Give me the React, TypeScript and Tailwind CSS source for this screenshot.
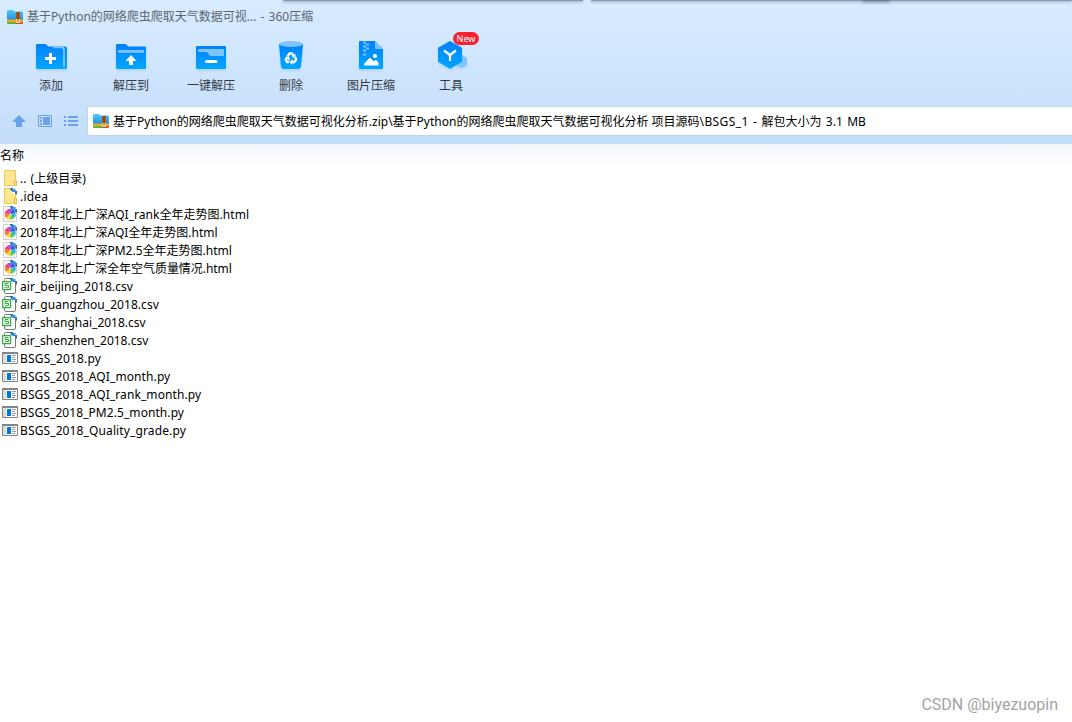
import type { ReactNode } from "react";
import clsx from "clsx";

type FileKind = "up" | "folder" | "html" | "csv" | "py";

interface FileEntry {
  name: string;
  kind: FileKind;
  tracking?: string;
}

const files: FileEntry[] = [
  { name: ".. (上级目录)", kind: "up", tracking: "[word-spacing:1px]" },
  { name: ".idea", kind: "folder", tracking: "tracking-[0.2px]" },
  { name: "2018年北上广深AQI_rank全年走势图.html", kind: "html", tracking: "tracking-[0.03px]" },
  { name: "2018年北上广深AQI全年走势图.html", kind: "html" },
  { name: "2018年北上广深PM2.5全年走势图.html", kind: "html" },
  { name: "2018年北上广深全年空气质量情况.html", kind: "html", tracking: "tracking-[-0.04px]" },
  { name: "air_beijing_2018.csv", kind: "csv", tracking: "tracking-[0.05px]" },
  { name: "air_guangzhou_2018.csv", kind: "csv", tracking: "tracking-[0.05px]" },
  { name: "air_shanghai_2018.csv", kind: "csv" },
  { name: "air_shenzhen_2018.csv", kind: "csv" },
  { name: "BSGS_2018.py", kind: "py", tracking: "tracking-[0.17px]" },
  { name: "BSGS_2018_AQI_month.py", kind: "py", tracking: "tracking-[0.1px]" },
  { name: "BSGS_2018_AQI_rank_month.py", kind: "py", tracking: "tracking-[0.09px]" },
  { name: "BSGS_2018_PM2.5_month.py", kind: "py", tracking: "tracking-[0.07px]" },
  { name: "BSGS_2018_Quality_grade.py", kind: "py", tracking: "tracking-[0.12px]" },
];

function ArchiveIcon() {
  return (
    <svg viewBox="0 0 16 14" className="h-[14px] w-4 shrink-0">
      <path d="M0 1Q0 0 1 0h5l1.500 1.500H15q1 0 1 1V10H0z" fill="url(#folder)" />
      <path d="M0 9.500h16V12H0z" fill="#f5a623" />
      <path d="M0 12h9v2H1q-1 0-1-1z" fill="#62b53a" />
      <path d="M12 12h4v1q0 1-1 1h-3z" fill="#e2513c" />
      <path d="M9 2h4v12H9z" fill="#a1571f" />
      <path d="M10.500 2.500h1v1h-1zm0 2h1v1h-1zm0 2h1v1h-1z" fill="#6d3510" />
      <path d="M9 9h4v4H9z" fill="#fbd98b" />
      <path d="M10.500 9h1v2.500h-1z" fill="#8a4717" />
    </svg>
  );
}

function ToolSvg({ children }: { children: ReactNode }) {
  return (
    <svg viewBox="0 0 32 32" className="size-8 overflow-visible drop-shadow-[0_2px_1px_rgba(70,150,230,0.18)]">
      {children}
    </svg>
  );
}

function AddIcon() {
  return (
    <ToolSvg>
      <path d="M1 5q0-1 1-1h8.500l3 2.500H30q2 0 2 2V27.500Q32 29 30.500 29H2q-1 0-1-1z" fill="url(#blue)" />
      <path d="M18 7.300h8.500q2.500 0 2.500 2.500V27" fill="none" stroke="#80c4ff" strokeWidth="1.800" />
      <path d="M15.500 13v11M10 18.500h11" stroke="#fff" strokeWidth="3" />
    </ToolSvg>
  );
}

function ExtractIcon() {
  return (
    <ToolSvg>
      <path d="M1 5q0-1 1-1h8.500l3 2.500H30q1 0 1 1V28q0 1-1 1H2q-1 0-1-1z" fill="url(#blue)" />
      <path d="M3 12.800V11q0-1 1-1h24q1 0 1 1v1.800z" fill="#80c4ff" />
      <path d="M16 15l5.500 6H18v4h-4v-4h-3.500z" fill="#fff" />
    </ToolSvg>
  );
}

function QuickExtractIcon() {
  return (
    <ToolSvg>
      <rect x="1" y="6" width="30" height="23" rx="1.200" fill="url(#blue)" />
      <path d="M3 10q0-1 1-1h24q1 0 1 1v6H15.500L11.500 12H3z" fill="#80c4ff" />
      <path d="M11.500 21.500h9.500" stroke="#fff" strokeWidth="3" strokeLinecap="round" />
    </ToolSvg>
  );
}

function DeleteIcon() {
  return (
    <ToolSvg>
      <path d="M4 4h24l-2 22.500Q25.700 29 23 29H9Q6.300 29 6 26.500z" fill="url(#blue)" />
      <ellipse cx="16" cy="4" rx="12" ry="3" fill="#80c4ff" />
      <g transform="translate(16 18)" fill="none" stroke="#fff" strokeWidth="2.300">
        <path d="M-3.600-1.400L-1.500-4.500H1L2.600-2" />
        <path d="M4.200-1L5.200 1.500 3.500 4H.5" />
        <path d="M-1.800 4h-2.200L-5.200 1.600-3.800-.8" />
      </g>
      <path d="M20.500 13.500v4h-4zM17.500 19v6l-3-3zM9.800 17.500l4.500-.8.600 4z" fill="#fff" />
    </ToolSvg>
  );
}

function ImageZipIcon() {
  return (
    <ToolSvg>
      <path d="M4 2q0-1 1-1h15l8 8v19q0 1-1 1H5q-1 0-1-1z" fill="url(#blue)" />
      <path d="M20 1l8 8h-7q-1 0-1-1z" fill="#80c4ff" />
      <path d="M8 1.500h3v2H8zm3 2h3v2h-3zm-3 2h3v2H8zm3 2h3v2h-3zm-3 2h3v2H8z" fill="#80c4ff" />
      <circle cx="9.500" cy="14.500" r="1.500" fill="#80c4ff" />
      <circle cx="20" cy="16" r="2" fill="#fff" />
      <path d="M9 25.500v-1.700l5-5.300q1-1 2 0l2.700 3 1.300-1.200q1-.6 1.800.3l1.700 2.200v2.700z" fill="#fff" />
    </ToolSvg>
  );
}

function ToolsIcon() {
  return (
    <ToolSvg>
      <path d="M27 15l5 3v6.800L26.500 28 20 25z" fill="#80c4ff" />
      <path d="M15 1L27 7.800V21.800L15 29 3 21.800V7.800z" fill="url(#blue)" />
      <path d="M9 10.500l6 4.500 6-4.500M15 15v6" fill="none" stroke="#fff" strokeWidth="2.200" />
    </ToolSvg>
  );
}

const tools = [
  { label: "添加", icon: <AddIcon /> },
  { label: "解压到", icon: <ExtractIcon /> },
  { label: "一键解压", icon: <QuickExtractIcon /> },
  { label: "删除", icon: <DeleteIcon /> },
  { label: "图片压缩", icon: <ImageZipIcon /> },
  { label: "工具", icon: <ToolsIcon />, isNew: true },
];

// blue shortcut mark that sits in the top right corner of file icons
function CornerMark() {
  return (
    <>
      <path d="M8 0h3v3H9z" fill="#1e6fb8" />
      <path d="M10 1h3.500v3H10z" fill="#3d93d9" />
      <path d="M13 3h2v4l-2-1.500z" fill="#1e78c8" />
    </>
  );
}

function FileIcon({ kind }: { kind: FileKind }) {
  return (
    <svg viewBox="0 0 16 16" className="size-4 shrink-0">
      {(kind === "up" || kind === "folder") && (
        <>
          <path d="M2.500.5h11v15h-11z" fill="#ffe594" stroke="#efc94c" />
          <path d="M12.500 10.500h2v5h-2z" fill="#ffe594" stroke="#e8bd3d" />
        </>
      )}
      {kind === "folder" && (
        <>
          <path d="M8 0h7v5h-5z" fill="#fff" />
          <CornerMark />
        </>
      )}
      {kind === "html" && (
        <>
          <path d="M1.500.5h9l4 4v11h-13z" fill="#f7f7f7" stroke="#cfcfcf" />
          <g transform="translate(-.7 -.7)">
            <path d="M9 9L5.800 4.500A5.500 5.500 0 0 1 10.500 3.700z" fill="#b44be1" />
            <path d="M9 9l1.500-5.300A5.500 5.500 0 0 1 14.300 7.500z" fill="#3857e8" />
            <path d="M9 9l5.300-1.500A5.500 5.500 0 0 1 13 12.800z" fill="#27b7df" />
            <path d="M9 9l4 3.800A5.500 5.500 0 0 1 9 14.500z" fill="#62c934" />
            <path d="M9 9v5.500A5.500 5.500 0 0 1 4.800 12.500z" fill="#ffd52e" />
            <path d="M9 9l-4.200 3.500A5.500 5.500 0 0 1 3.500 8z" fill="#ff7a29" />
            <path d="M9 9L3.500 8A5.500 5.500 0 0 1 5.800 4.500z" fill="#f03d5e" />
            <circle cx="9" cy="9" r=".8" fill="#fff" />
          </g>
          <CornerMark />
        </>
      )}
      {kind === "csv" && (
        <>
          <path d="M2.500 3.500v-2q0-1 1-1h6l4 4V14q0 1.500-1.500 1.500H4q-1.500 0-1.500-1.500v-2" fill="#fff" stroke="#787878" />
          <path d="M.6 3.600h8v8h-8z" fill="#f2fbf2" stroke="#36ad45" strokeWidth="1.200" />
          <path d="M6.500 5.500h-3.500v2h3.500v2.200H2.700" fill="none" stroke="#36ad45" />
          <CornerMark />
        </>
      )}
      {kind === "py" && (
        <>
          <path d="M.5 2.500h15v11H.5z" fill="#fff" stroke="#858585" />
          <path d="M0 2h16v2H0z" fill="#858585" />
          <path d="M1 4h3v9H1z" fill="#d9dde0" />
          <path d="M5 5h4v7H5z" fill="#0078d7" />
          <path d="M10 5.500h4M10 7.500h3M10 9.500h4M10 11.500h3" stroke="#9c9c9c" />
        </>
      )}
    </svg>
  );
}

function TitleBar() {
  return (
    <div className="relative flex h-8 items-center pl-[7px] pt-px text-[#5c6670]">
      <div className="absolute left-[283px] top-0 h-px w-[300px] bg-[#8797a8] shadow-[0_1px_3px_rgba(70,90,115,0.8)]" />
      <div className="absolute left-[591px] right-0 top-0 h-px bg-[#8797a8] shadow-[0_1px_3px_rgba(70,90,115,0.75)]">
        <div className="absolute left-[271px] top-0 h-px w-7 bg-[#6d7b8c] shadow-[0_1px_3px_rgba(60,75,95,0.8)]" />
      </div>
      <ArchiveIcon />
      <span className="ml-1 text-[12px] [word-spacing:1px]">基于Python的网络爬虫爬取天气数据可视... - 360压缩</span>
    </div>
  );
}

function Toolbar() {
  return (
    <div className="flex h-[74px] pl-[11px] pt-2">
      {tools.map((t) => (
        <button key={t.label} type="button" className="relative flex w-20 flex-col items-center text-[12px] text-[#303a44]">
          {t.icon}
          <span className="mt-[5px] leading-[18px]">{t.label}</span>
          {t.isNew && (
            <span className="absolute -top-2 left-[42px] h-[13px] w-[26px] rounded-full bg-[#f9202f] text-center text-[9px] leading-[13px] text-white">
              New
            </span>
          )}
        </button>
      ))}
    </div>
  );
}

function AddressBar() {
  return (
    <div className="flex h-[30px] items-center">
      <div className="flex w-[87px] items-center gap-3 pl-3 text-[#6ba1ec]">
        <svg viewBox="0 0 14 14" className="size-3.5">
          <path d="M7 1l7 7h-4v5H4V8H0z" fill="currentColor" />
        </svg>
        <svg viewBox="0 0 14 12" className="h-3 w-3.5">
          <path d="M.5.5h13v11H.5z" fill="none" stroke="currentColor" />
          <path d="M5 2h7v8H5zM2 2h2v2H2zm0 3h2v2H2zm0 3h2v2H2z" fill="currentColor" />
        </svg>
        <svg viewBox="0 0 14 12" className="h-3 w-3.5">
          <path d="M0 1h2v2H0zm4 0h10v2H4zM0 5h2v2H0zm4 0h10v2H4zM0 9h2v2H0zm4 0h10v2H4z" fill="currentColor" />
        </svg>
      </div>
      <div className="flex h-[30px] flex-1 items-center border border-r-0 border-[#b9d6f2] bg-white pl-[5px] text-black">
        <ArchiveIcon />
        <span className="ml-1 whitespace-pre pt-0.5 text-[12px]">
          基于Python的网络爬虫爬取天气数据可视化分析.zip\基于Python的网络爬虫爬取天气数据可视化分析 项目源码
          <span className="tracking-[0.4px]">\BSGS_1</span>
          <span className="[word-spacing:1.3px]"> - 解包大小为 3.1 MB</span>
        </span>
      </div>
    </div>
  );
}

export default function App() {
  return (
    <div className="relative flex h-[722px] w-[1072px] flex-col overflow-hidden bg-white font-['Noto_Sans','Noto_Sans_CJK_SC',sans-serif] text-[12px] text-black">
      <svg className="absolute size-0">
        <defs>
          <linearGradient id="blue" x1="0" y1="0" x2="0" y2="1">
            <stop offset="0" stopColor="#0080ff" />
            <stop offset="1" stopColor="#00a8ff" />
          </linearGradient>
          <linearGradient id="folder" x1="0" y1="0" x2="0" y2="1">
            <stop offset="0" stopColor="#55c8fa" />
            <stop offset="1" stopColor="#1f93dd" />
          </linearGradient>
        </defs>
      </svg>
      <header className="h-36 shrink-0 bg-linear-to-b from-[#d7ecff] via-[#cde3fc] via-60% to-[#c3def9]">
        <TitleBar />
        <Toolbar />
        <AddressBar />
      </header>
      <main className="flex-1">
        <div className="h-[25px] bg-linear-to-b from-[#f2f8fe] to-white leading-[23px]">名称</div>
        <ul>
          {files.map((f) => (
            <li key={f.name} className="flex h-[18px] items-center pl-0.5">
              <FileIcon kind={f.kind} />
              <span className={clsx("ml-0.5 whitespace-pre pt-0.5 leading-[18px]", f.tracking)}>{f.name}</span>
            </li>
          ))}
        </ul>
      </main>
      <div className="absolute bottom-[7px] right-[14px] font-[Roboto,sans-serif] text-[16px] leading-5 text-[#a3a3a3]">
        CSDN @biyezuopin
      </div>
    </div>
  );
}
